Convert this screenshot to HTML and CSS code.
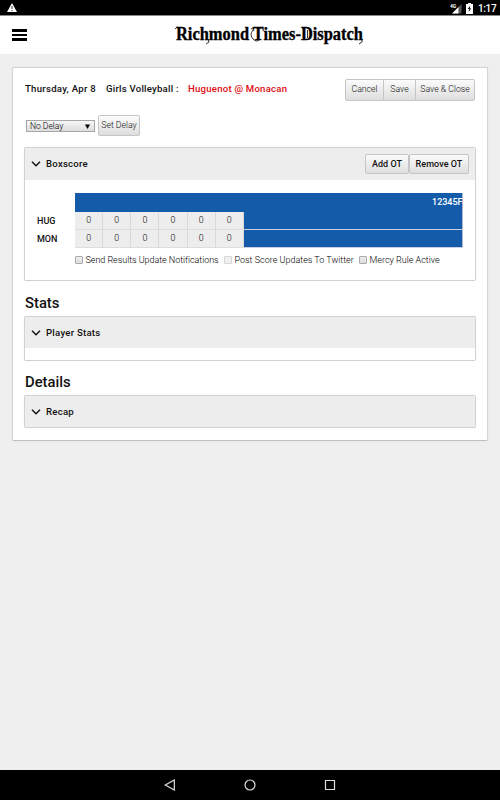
FILE: index.html
```
<!DOCTYPE html>
<html lang="en">
<head>
<meta charset="utf-8">
<title>Richmond Times-Dispatch</title>
<link rel="stylesheet" href="styles.css">
</head>
<body>
<div class="status">
  <svg class="warn" width="10" height="9" viewBox="0 0 10 9"><path d="M5 0L10 9H0Z" fill="#fff"/><path d="M5 3v3M5 7v1" stroke="#333" stroke-width="1"/></svg>
  <div class="status-right">
    <svg width="12" height="11" viewBox="0 0 12 11"><path d="M11.5 1V10.5H2Z" fill="#555"/><path d="M8.5 4V10.5H2Z" fill="#fff"/><text x="0" y="4.6" class="net">4G</text></svg>
    <svg width="7" height="11" viewBox="0 0 7 11"><path d="M2 1V0h3v1h2v10H0V1z" fill="#fff"/><path d="M4.3 2.5L1.7 6h1.6L2.6 9l2.7-3.6H3.7z" fill="#000"/></svg>
    <span class="clock">1:17</span>
  </div>
</div>
<header class="top">
  <div class="menu"><i></i><i></i><i></i></div>
  <svg class="logo" width="220" height="36" viewBox="0 0 220 36">
    <text x="1" y="23" textLength="187" lengthAdjust="spacingAndGlyphs">Richmond Times-Dispatch</text>
    <path class="flourish" d="M0 12q2-3 5-1M4.500 13v8M33 22l1 3-3 2M76 12q3-3 6-1t6-1M78 13q-4 5 0 9t7 0M127 12q3-3 6-1M132.500 13v8M187 22v3l-3 2"/>
  </svg>
</header>
<main class="card">
  <div class="title-row">
    <span class="date">Thursday, Apr 8</span>
    <span class="sport">Girls Volleyball :</span>
    <span class="match">Huguenot @ Monacan</span>
    <div class="actions"><span class="btn cancel">Cancel</span><span class="btn save">Save</span><span class="btn close">Save &amp; Close</span></div>
  </div>
  <div class="delay-row">
    <div class="select"><span>No Delay</span><svg width="5" height="5" viewBox="0 0 5 5"><path d="M0 .5h5L2.500 5z" fill="#000"/></svg></div>
    <span class="btn set">Set Delay</span>
  </div>
  <section class="panel box">
    <div class="panel-head">
      <svg class="chev" width="10" height="6" viewBox="0 0 10 6"><path d="M1 .8l4 4 4-4"/></svg>
      <span class="boxscore">Boxscore</span>
      <div class="ot"><span class="btn add">Add OT</span><span class="btn remove">Remove OT</span></div>
    </div>
    <div class="scores">
      <div class="score-head"><span>12345F</span></div>
      <div class="team">HUG</div>
      <div class="line"><b>0</b><b>0</b><b>0</b><b>0</b><b>0</b><b>0</b></div>
      <div class="team">MON</div>
      <div class="line"><b>0</b><b>0</b><b>0</b><b>0</b><b>0</b><b>0</b></div>
    </div>
    <div class="checks">
      <i class="check"></i><span class="c1">Send Results Update Notifications</span>
      <i class="check off"></i><span class="c2">Post Score Updates To Twitter</span>
      <i class="check"></i><span class="c3">Mercy Rule Active</span>
    </div>
  </section>
  <h2 class="stats">Stats</h2>
  <section class="panel players">
    <div class="panel-head"><svg class="chev" width="10" height="6" viewBox="0 0 10 6"><path d="M1 .8l4 4 4-4"/></svg><span class="player">Player Stats</span></div>
  </section>
  <h2 class="details">Details</h2>
  <section class="panel recap">
    <div class="panel-head"><svg class="chev" width="10" height="6" viewBox="0 0 10 6"><path d="M1 .8l4 4 4-4"/></svg><span>Recap</span></div>
  </section>
</main>
<nav class="nav">
  <svg width="12" height="12" viewBox="0 0 12 12"><path d="M10.3 1v10L1.3 6z"/></svg>
  <svg width="12" height="12" viewBox="0 0 12 12"><circle cx="6" cy="6" r="5"/></svg>
  <svg width="12" height="12" viewBox="0 0 12 12"><path d="M1.5 1.5h9v9h-9z"/></svg>
</nav>
</body>
</html>
```
FILE: styles.css
```
* { box-sizing: border-box; }
body { margin: 0; height: 800px; display: flex; flex-direction: column; background: #efefef; font: 9px/12px Roboto, sans-serif; color: #111; overflow: hidden; white-space: nowrap; }
svg { display: block; flex: none; }
i, b { font-style: normal; font-weight: 400; }
.status { height: 16px; background: #000; border-bottom: 1px solid #8d8888; display: flex; justify-content: space-between; padding: 3px 5px 0 7px; color: #fff; }
.status-right { display: flex; }
.status-right svg + svg { margin: 0 5px 0 4px; }
.net { font: 700 5px Roboto, sans-serif; fill: #fff; }
.clock { font-size: 10px; line-height: 11px; font-weight: 500; width: 17px; letter-spacing: -.35px; }
.top { height: 38px; background: #fff; display: flex; align-items: center; }
.menu { width: 15px; margin-left: 12px; display: grid; gap: 2px; }
.menu i { height: 2.4px; background: #000; }
.logo { margin-left: 148px; overflow: visible; }
.logo text { font: 700 18px "Liberation Serif", serif; stroke: #000; stroke-width: .35px; }
.flourish { fill: none; stroke: #000; stroke-width: .8; }
.card { margin: 13px 12px 0; height: 374px; background: #fff; border: 1px solid #d5d5d5; border-bottom-color: #bdc1c1; border-radius: 2px; padding: 11px 11px 0; box-shadow: 0 0 1px #ccc; }
.title-row { display: flex; height: 22px; align-items: center; font-size: 9.6px; font-weight: 500; padding: 0 1px; }
.title-row > span { position: relative; top: -1px; }
.date { width: 81px; letter-spacing: .27px; }
.sport { width: 82px; letter-spacing: .23px; }
.match { color: #de0b12; letter-spacing: .22px; }
.actions { display: flex; margin-left: auto; }
.btn { height: 21px; border: 1px solid #c5c5c5; border-radius: 2px; background: linear-gradient(#fbfbfb, #dedede); text-align: center; line-height: 18px; font-size: 8.7px; font-weight: 300; color: #111; }
.actions .btn { height: 22px; line-height: 19px; }
.cancel { width: 39px; border-radius: 2px 0 0 2px; }
.save { width: 31px; border-width: 1px 0; border-radius: 0; }
.close { width: 60px; border-radius: 0 2px 2px 0; }
.delay-row { display: flex; margin: 14px 0 0 2px; height: 21px; align-items: flex-start; }
.select { width: 69px; height: 12px; margin-top: 5px; border: 1px solid #a6a6a6; background: linear-gradient(#f6f6f6, #ddd); display: flex; align-items: center; justify-content: space-between; padding: 0 4px 0 3px; color: #000; font-weight: 300; font-size: 8.5px; line-height: 10px; }
.set { width: 42px; margin-left: 3px; }
.panel { border: 1px solid #d2d2d2; border-radius: 2px; background: #fff; box-shadow: 0 0 1px #ddd; }
.box { height: 134px; margin-top: 11px; }
.panel-head { height: 32px; background: #ededed; display: flex; align-items: center; padding: 0 6px; font-weight: 500; font-size: 9.6px; letter-spacing: .24px; }
.chev { margin-right: 5px; }
.chev path { stroke: #111; stroke-width: 1.4; fill: none; }
.ot { display: flex; margin-left: auto; }
.ot .btn { color: #111; font-weight: 500; font-size: 9px; letter-spacing: .05px; height: 20px; }
.ot .add { width: 44px; }
.remove { width: 60px; }
.scores { display: grid; grid-template-columns: 38px 387.5px; grid-template-rows: 19px 18px 18px; margin: 13px 0 0 12px; }
.score-head { grid-column: 2; background: #145ca9; border-right: 1px solid #b4b4d4; color: #fff; font-weight: 500; font-size: 9px; line-height: 18px; text-align: right; letter-spacing: -.02px; }
.score-head span { margin-right: -1px; }
.team { font-weight: 500; font-size: 9px; line-height: 18px; }
.line { display: flex; background: #145ca9; border-right: 1px solid #b4b4d4; border-bottom: 1px solid #c8d0e6; }
.line b { width: 28.15px; border-right: 1px solid #d9d9d9; border-bottom: 1px solid #ddd; margin-bottom: -1px; background: #ededed; text-align: center; font-size: 8.8px; line-height: 16px; font-weight: 300; color: #000; }
.checks { display: flex; align-items: center; margin: 6px 0 0 50px; height: 12px; color: #000; font-size: 9px; font-weight: 300; }
.check { width: 8px; height: 8px; border: 1px solid #aaa; border-radius: 1px; background: linear-gradient(#eee, #ddd); margin-right: 2.5px; flex: none; }
.off { border-color: #d5d5d5; background: #f0f0f0; }
.c1 { width: 138.5px; letter-spacing: -.04px; }
.c2 { width: 124.5px; }
h2 { margin: 0 1px; font-size: 14.8px; line-height: 18px; font-weight: 500; }
.stats { margin-top: 13px; }
.players { height: 45px; margin-top: 4px; }
.players .panel-head { height: 31px; }
.details { margin-top: 12px; }
.recap { height: 33px; margin-top: 4px; }
.recap .panel-head { height: 31px; }
.nav { margin-top: auto; height: 30px; background: #000; display: flex; justify-content: center; align-items: center; gap: 68px; }
.nav svg { fill: none; stroke: #ddd; stroke-width: 1.2; }
```
